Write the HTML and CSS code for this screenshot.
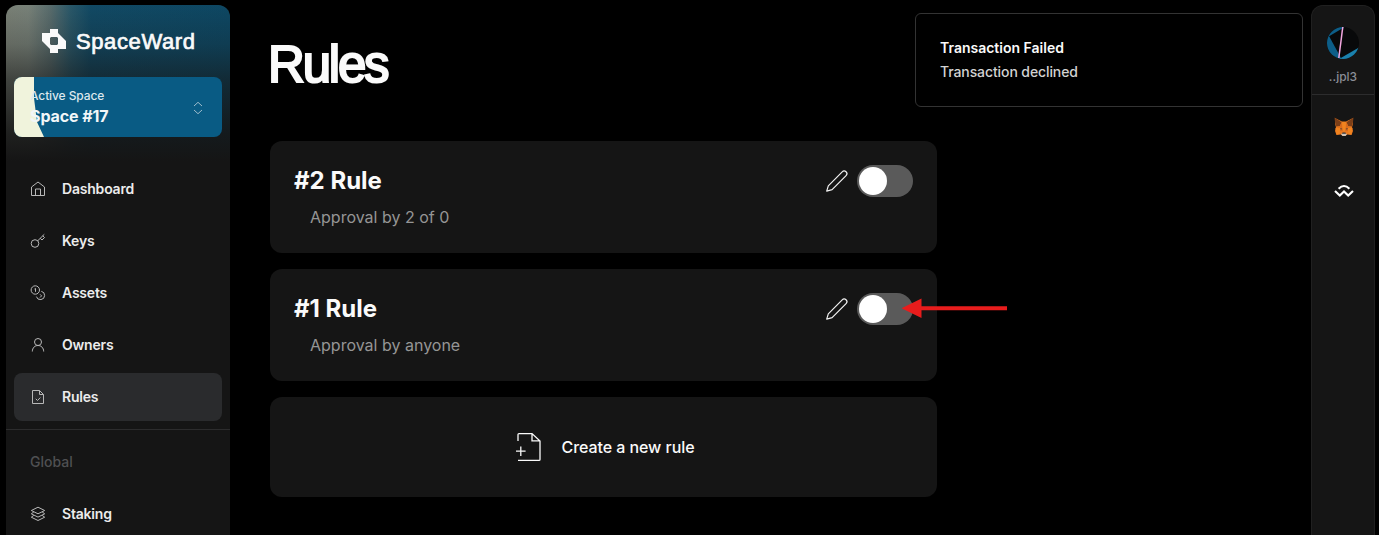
FILE: index.html
```html
<!DOCTYPE html>
<html lang="en">
<head>
<meta charset="utf-8">
<title>SpaceWard – Rules</title>
<link rel="stylesheet" href="styles.css">
</head>
<body>
<div class="app">
  <aside class="sidebar">
    <div class="glow"></div>
    <div class="brand">
      <svg width="24" height="24" viewBox="0 0 24 24"><path fill="#fafafa" fill-rule="evenodd" d="M8 0H16V4L24 12V20H16V24H8V20L0 12V4H8ZM9 8L8 9V15L9 16H15L16 15V9L15 8Z"/></svg>
      <span class="brand-name">SpaceWard</span>
    </div>
    <div class="space">
      <svg class="space-art" width="208" height="60" viewBox="0 0 208 60"><path fill="#f0f3dc" d="M0 0H20V21L23 45L30 60H0Z"/></svg>
      <div class="space-text">
        <span class="space-label">Active Space</span>
        <span class="space-name">Space #17</span>
      </div>
      <svg class="chevrons" width="16" height="16" viewBox="0 0 16 16" fill="none" stroke="#9dbccc" stroke-width="1"><path d="M4 6L8 2.3L12 6M4 10L8 13.7L12 10"/></svg>
    </div>
    <nav class="nav">
      <a class="item"><svg class="icon" viewBox="0 0 16 16"><path d="M1.5 6L8 1L14.5 6V14.5H1.5ZM5.5 14.5V8H10.5V14.5"/></svg><span class="item-label">Dashboard</span></a>
      <a class="item"><svg class="icon" viewBox="0 0 16 16"><circle cx="5" cy="10.5" r="3.8"/><path d="M7.7 7.8L14.3 1.3M10.2 5.3L12 7L14.5 4.5L12.7 2.8"/></svg><span class="item-label">Keys</span></a>
      <a class="item"><svg class="icon" viewBox="0 0 16 16"><circle cx="5.3" cy="5" r="4.2"/><path d="M4.5 4L5.5 3.4V6.8M11.3 6.3A4.2 4.2 0 1 1 6.4 11.6M10 9.3L11.6 10.9L10 12.5"/></svg><span class="item-label">Assets</span></a>
      <a class="item"><svg class="icon" viewBox="0 0 16 16"><circle cx="8" cy="5" r="3.5"/><path d="M2.3 14.5C2.5 10.8 4.7 8.5 8 8.5S13.5 10.8 13.7 14.5"/></svg><span class="item-label">Owners</span></a>
      <a class="item active"><svg class="icon" viewBox="0 0 16 16"><path d="M2.5 1.5H9.5L13.5 5.5V14.5H2.5ZM9.5 1.5V5.5H13.5M5.8 9.8L7.5 11.5L10.3 8.6"/></svg><span class="item-label">Rules</span></a>
    </nav>
    <div class="group">Global</div>
    <nav class="nav nav-global">
      <a class="item"><svg class="icon" viewBox="0 0 16 16"><path d="M8 1.2L14.7 4.5L8 7.8L1.3 4.5ZM1.3 7.8L8 11.1L14.7 7.8L12.2 6M1.3 7.8L3.8 6M1.3 11.2L8 14.5L14.7 11.2L12.2 9.4M1.3 11.2L3.8 9.4"/></svg><span class="item-label">Staking</span></a>
    </nav>
  </aside>

  <main class="main">
    <h1 class="title">Rules</h1>
    <section class="card rule">
      <div class="rule-text"><h2 class="rule-name">#2 Rule</h2><p class="rule-desc">Approval by 2 of 0</p></div>
      <svg class="pencil" width="24" height="24" viewBox="0 0 24 24"><path d="M1.7 22.2L3.3 16.8L17.2 2.8A2.6 2.6 0 0 1 21.1 6.6L7.1 20.6Z"/></svg>
      <span class="toggle"><span class="knob"></span></span>
    </section>
    <section class="card rule">
      <div class="rule-text"><h2 class="rule-name">#1 Rule</h2><p class="rule-desc">Approval by anyone</p></div>
      <svg class="pencil" width="24" height="24" viewBox="0 0 24 24"><path d="M1.7 22.2L3.3 16.8L17.2 2.8A2.6 2.6 0 0 1 21.1 6.6L7.1 20.6Z"/></svg>
      <span class="toggle"><span class="knob"></span></span>
      <svg class="arrow" width="106" height="22" viewBox="0 0 106 22"><path fill="#e81c1c" d="M-.5 10.3L19.5 .5V8.3H105V12.2H19.5V20Z"/></svg>
    </section>
    <section class="card create">
      <svg width="32" height="32" viewBox="0 0 32 32" fill="none" stroke="#fafafa" stroke-width="1.3"><path d="M6 10V3.6Q6 2.6 7 2.6H20L28 10V28.4Q28 29.4 27 29.4H6M20 2.6V9.8H28M8.8 15.5V25M4 20.2H13.6"/></svg>
      <span>Create a new rule</span>
    </section>
  </main>

  <aside class="rail">
    <div class="account">
      <svg width="32" height="32" viewBox="0 0 32 32">
        <defs><clipPath id="avatar"><circle cx="16" cy="16" r="16"/></clipPath></defs>
        <g clip-path="url(#avatar)"><path fill="#08090a" d="M0 0H32V32H0Z"/><path fill="#0d5e88" d="M0 9L2 9L14 31V32H0Z"/><path fill="#0d5e88" d="M0 9L8 0H17L16 1L2.5 9Z"/><path fill="#1a81ad" d="M12 32L32 20.5V32Z"/><path stroke="#f2a6df" stroke-width="1.5" d="M15.8 0L11.8 31"/></g>
      </svg>
      <span class="account-name">..jpl3</span>
    </div>
    <div class="wallets">
      <svg width="20" height="20" viewBox="0 0 20 20">
        <path fill="#e9781f" d="M1 1L8 4.5H12L19 1V7L18 10L19 14L17.5 18L13 17.5L11.5 19H8.5L7 17.5L2.5 18L1 14L2 10L1 7Z"/>
        <path fill="#7c3f18" d="M.5 .5L7.5 5.2L6 9L1.8 9.5L1 5ZM19.5 .5L12.5 5.2L14 9L18.2 9.5L19 5Z"/>
        <path fill="#d96a1c" d="M7.5 5.2L9 14H6L2 12L6 9ZM12.5 5.2L11 14H14L18 12L14 9Z"/>
        <path fill="#f0831f" d="M8 5H12L11.2 14H8.8ZM1.5 11L6.5 10.5L5.5 17L2.5 17.5ZM18.5 11L13.5 10.5L14.5 17L17.5 17.5Z"/>
        <path fill="#2b333b" d="M6.3 11L8.4 12L6.8 12.6ZM13.7 11L11.6 12L13.2 12.6ZM8.5 15.5H11.5L12 17H8Z"/><path fill="#d1c4b8" d="M7 17L8 16.7H12L13 17L11.5 19H8.5Z"/>
      </svg>
      <svg width="20" height="14" viewBox="0 0 20 14" fill="none" stroke="#fff" stroke-width="2.1"><path d="M4.6 4.8Q10 -.8 15.4 4.8M1 6.9L5.8 11.6L10 7.4L14.2 11.6L19 6.9"/></svg>
    </div>
  </aside>

  <div class="toast"><strong class="toast-title">Transaction Failed</strong><span class="toast-body">Transaction declined</span></div>
</div>
</body>
</html>
```

FILE: styles.css
```css
* { box-sizing: border-box; }
body { margin: 0; background: #000; color: #fafafa; font-family: Inter, sans-serif; }
.app { position: relative; display: flex; height: 535px; padding: 5px 4px 0 6px; overflow: hidden; }
h1, h2, p { margin: 0; }
svg { flex: none; }

.sidebar { position: relative; width: 224px; flex: none; background: #151515; border-radius: 12px 12px 0 0; overflow: hidden; }
.glow {
  position: absolute; inset: 0 0 auto; height: 156px;
  background:
    linear-gradient(180deg, rgba(21,21,21,.05) 0%, rgba(21,21,21,.25) 25%, rgba(21,21,21,.6) 48%, rgba(21,21,21,.9) 82%, #151515 100%),
    linear-gradient(90deg, #7f867b 0%, #7d877e 10%, #5b7071 20%, #2a5b6d 29%, #114c68 38%, #0d4a67 100%);
}
.brand { position: relative; display: flex; align-items: center; gap: 10px; padding: 24px 0 0 36px; height: 48px; }
.brand-name { padding-top: 1px; font: 22px/24px "Liberation Sans", sans-serif; letter-spacing: .6px; -webkit-text-stroke: .7px #fafafa; }
.space { position: relative; display: flex; align-items: center; justify-content: space-between; height: 60px; margin: 24px 8px 0; padding: 2px 16px 0; background: #095b84; border-radius: 8px; overflow: hidden; }
.space-art { position: absolute; inset: 0; }
.space-text { position: relative; display: flex; flex-direction: column; }
.space-label { font-size: 12px; line-height: 16px; font-weight: 500; letter-spacing: -.1px; color: #dce8ee; }
.space-name { font-size: 16px; line-height: 24px; font-weight: 700; letter-spacing: -.1px; color: #f1f6f8; }
.nav { position: relative; display: flex; flex-direction: column; gap: 4px; padding: 28px 8px 8px; }
.item { display: flex; align-items: center; gap: 16px; height: 48px; padding: 0 16px; border-radius: 8px; font-size: 14px; font-weight: 600; letter-spacing: -.2px; color: #ececec; }
.item-label { padding-bottom: 2px; }
.item.active { background: #2a2b2d; }
.icon { width: 16px; height: 16px; fill: none; stroke: #b8b8b8; stroke-width: 1; stroke-linejoin: round; }
.group { border-top: 1px solid #2c2c2d; padding: 23px 24px 0; height: 61px; font-size: 14px; line-height: 18px; font-weight: 500; color: #4f5052; }
.nav-global { padding-top: 0; }

.main { width: 667px; margin-left: 40px; display: flex; flex-direction: column; gap: 16px; }
.title { height: 120px; margin-left: -2px; padding-top: 30px; font: 51px/60px "Liberation Sans", sans-serif; letter-spacing: -2.2px; -webkit-text-stroke: 2.2px #fafafa; }
.card { background: #151515; border-radius: 12px; }
.rule { position: relative; display: flex; align-items: flex-start; height: 112px; padding: 24px; }
.rule-text { flex: 1; }
.rule-name { font-size: 24px; line-height: 32px; font-weight: 700; }
.rule-desc { padding: 8px 16px 0; font-size: 16px; line-height: 24px; color: #959595; }
.pencil { margin: 4px 8px 0 0; fill: none; stroke: #f2f2f2; stroke-width: 1.2; stroke-linejoin: round; }
.toggle { display: flex; align-items: center; width: 56px; height: 32px; padding: 0 2px; border-radius: 16px; background: #5a5a5a; }
.knob { width: 28px; height: 28px; border-radius: 50%; background: #fff; }
.arrow { position: absolute; left: 632px; top: 29px; }
.create { display: flex; align-items: center; justify-content: center; gap: 17px; height: 100px; font-size: 16px; font-weight: 500; letter-spacing: -.06px; }

.rail { width: 64px; margin-left: auto; background: #151515; border: 1px solid #202020; border-bottom: 0; border-radius: 12px 12px 0 0; }
.account { display: flex; flex-direction: column; align-items: center; gap: 10px; height: 89px; padding-top: 21px; border-bottom: 1px solid #2c2c2d; }
.account-name { font-size: 12px; line-height: 16px; font-weight: 500; color: #8b8e96; }
.wallets { display: flex; flex-direction: column; align-items: center; gap: 47px; padding: 22px 0 0 2px; }

.toast { position: absolute; left: 915px; top: 13px; width: 388px; height: 94px; display: flex; flex-direction: column; gap: 4px; padding: 24px; background: #000; border: 1px solid #333; border-radius: 6px; font-size: 14px; line-height: 20px; }
.toast-title { font-weight: 600; }
.toast-body { color: #d2d2d2; font-weight: 500; letter-spacing: -.1px; }
```
